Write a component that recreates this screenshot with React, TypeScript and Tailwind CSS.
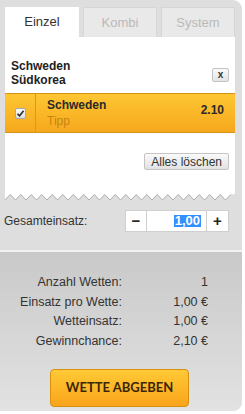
import React from "react";

const font = "font-['Liberation_Sans',Arial,sans-serif]";

function Zigzag() {
  // bottom edge of the white slip: teeth pointing down
  const w = 230;
  const p = 10.5;
  const pts: string[] = [];
  for (let x = 0; x <= w; x += p) {
    pts.push(`${x},6`);
    pts.push(`${Math.min(x + p / 2, w)},0.5`);
  }
  const line = pts.join(" ");
  return (
    <svg width={w} height={7} viewBox={`0 0 ${w} 7`} className="block">
      <polygon points={`0,0 ${line} ${w},0`} fill="#fff" />
      <polyline points={line} fill="none" stroke="#adadad" strokeWidth={1} />
    </svg>
  );
}

function Tab({ label, active }: { label: string; active?: boolean }) {
  return (
    <div
      className={
        active
          ? "h-[30px] bg-white flex items-center justify-center text-[13px] text-[#333]"
          : "h-[30px] bg-[#e9e9e9] border border-[#d6d6d6] border-b-0 flex items-center justify-center text-[13px] text-[#b9b9b9]"
      }
    >
      {label}
    </div>
  );
}

function SummaryRow({ label, value }: { label: string; value: string }) {
  return (
    <>
      <div className="text-right">{label}</div>
      <div className="text-right">{value}</div>
    </>
  );
}

export default function App() {
  return (
    <div className={`w-[242px] h-[411px] bg-[#dedede] rounded-r-[9px] flex flex-col overflow-hidden ${font}`}>
      <div className="px-[5px] pt-[7px] w-[240px]">
        <div className="grid grid-cols-3 gap-[4px]">
          <Tab label="Einzel" active />
          <Tab label="Kombi" />
          <Tab label="System" />
        </div>

        <div className="bg-white pt-[23px]">
          <div className="flex items-center justify-between pl-[6px] pr-[6px]">
            <div className="text-[12px] leading-[13.5px] font-bold text-[#222]">
              <div>Schweden</div>
              <div>Südkorea</div>
            </div>
            <button className="w-[17px] h-[14px] mt-[2px] rounded-[2px] border border-[#c4c4c4] bg-gradient-to-b from-[#fafafa] to-[#e4e4e4] text-[10px] font-bold leading-none text-[#333] flex items-center justify-center">
              x
            </button>
          </div>

          <div className="mt-[6px] h-[40px] flex border-y border-[#d4961a] bg-gradient-to-b from-[#fec632] to-[#f6a81d]">
            <div className="w-[31px] border-r border-[#d99a1c] flex items-center justify-center">
              <div className="w-[11px] h-[11px] rounded-[2px] border border-[#a8a8a8] bg-gradient-to-b from-[#fdfdfd] to-[#dcdcdc] flex items-center justify-center">
                <svg width="9" height="9" viewBox="0 0 9 9">
                  <path d="M1.5 4.8 L3.6 6.8 L7.6 1.8" fill="none" stroke="#333" strokeWidth="1.7" />
                </svg>
              </div>
            </div>
            <div className="flex-1 flex items-center justify-between pl-[11px] pr-[11px]">
              <div className="leading-[16px]">
                <div className="text-[12px] font-bold text-[#2a2a2a]">Schweden</div>
                <div className="text-[12px] text-[#c58611]">Tipp</div>
              </div>
              <div className="text-[12px] font-bold text-[#2a2a2a] -mt-[6px]">2.10</div>
            </div>
          </div>

          <div className="flex justify-end pr-[6px] mt-[20px] pb-[24px]">
            <button className="h-[17px] px-[6px] rounded-[2px] border border-[#c4c4c4] bg-gradient-to-b from-[#fafafa] to-[#e2e2e2] text-[12px] leading-none text-[#333]">
              Alles löschen
            </button>
          </div>
        </div>
        <Zigzag />
      </div>

      <div className="flex items-center justify-between pl-[4px] pr-[13px] mt-[9px] h-[22px]">
        <span className="text-[12px] text-[#333]">Gesamteinsatz:</span>
        <div className="flex h-[22px] border border-[#cfcfcf] bg-white">
          <div className="w-[21px] border-r border-[#cfcfcf] flex items-center justify-center text-[15px] font-bold text-[#222]">
            −
          </div>
          <div className="w-[60px] border-r border-[#cfcfcf] flex items-center justify-end pr-[5px]">
            <span className="bg-[#3390ff] text-white text-[13px] font-bold leading-[12px] px-[1px]">1,00</span>
          </div>
          <div className="w-[21px] flex items-center justify-center text-[15px] font-bold text-[#222]">+</div>
        </div>
      </div>

      <div className="mt-[18px] border-t-2 border-[#f2f2f2] flex-1 bg-gradient-to-b from-[#c9c9c9] to-[#e2e2e2] flex flex-col">
        <div className="grid grid-cols-[122px_86px] text-[12.5px] leading-[19.7px] text-[#333] mt-[21px]">
          <SummaryRow label="Anzahl Wetten:" value="1" />
          <SummaryRow label="Einsatz pro Wette:" value="1,00 €" />
          <SummaryRow label="Wetteinsatz:" value="1,00 €" />
          <SummaryRow label="Gewinnchance:" value="2,10 €" />
        </div>
        <button className="ml-[50px] mt-[17px] w-[139px] h-[38px] rounded-[4px] border border-[#d98f10] bg-gradient-to-b from-[#ffc935] to-[#f9a41a] text-[13px] font-bold text-[#3b2706] font-['Lato',sans-serif]">
          WETTE ABGEBEN
        </button>
      </div>
    </div>
  );
}
